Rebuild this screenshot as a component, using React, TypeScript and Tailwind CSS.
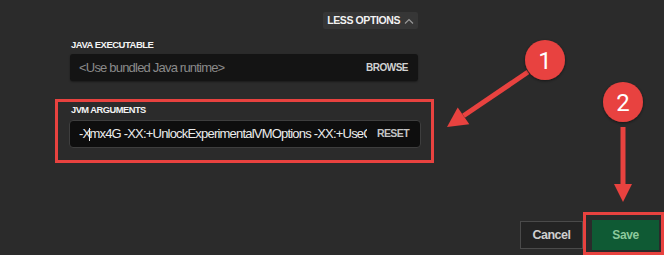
import type { JSX } from "react";

function ChevronUp(): JSX.Element {
  return (
    <svg width="10" height="6" viewBox="0 0 10 6" className="ml-[4px]">
      <path d="M1 5.5 L5 1.5 L9 5.5" fill="none" stroke="#9a9a9a" strokeWidth="1.1" />
    </svg>
  );
}

function Annotations(): JSX.Element {
  return (
    <svg
      width="664"
      height="255"
      viewBox="0 0 664 255"
      className="absolute inset-0 pointer-events-none"
    >
      <defs>
        <filter id="shadow" x="-30%" y="-30%" width="160%" height="160%">
          <feDropShadow dx="0" dy="1" stdDeviation="1.5" floodColor="#000" floodOpacity="0.5" />
        </filter>
      </defs>
      {/* arrow 1 */}
      <line x1="528" y1="72" x2="463.5" y2="115.8" stroke="#e8423f" strokeWidth="5" />
      <polygon points="447,127 469.3,124.2 457.7,107.4" fill="#e8423f" />
      <circle cx="545" cy="60" r="20" fill="#e8423f" filter="url(#shadow)" />
      <text
        x="545"
        y="69"
        textAnchor="middle"
        fontSize="24"
        fill="#fff"
        fontFamily="Roboto, 'Liberation Sans', sans-serif"
      >
        1
      </text>
      {/* arrow 2 */}
      <line x1="623" y1="127" x2="623" y2="186" stroke="#e8423f" strokeWidth="5" />
      <polygon points="614,184 632,184 623,202" fill="#e8423f" />
      <circle cx="623" cy="102" r="20" fill="#e8423f" filter="url(#shadow)" />
      <text
        x="623"
        y="111"
        textAnchor="middle"
        fontSize="24"
        fill="#fff"
        fontFamily="Roboto, 'Liberation Sans', sans-serif"
      >
        2
      </text>
    </svg>
  );
}

export default function App(): JSX.Element {
  return (
    <div className="relative w-[664px] h-[255px] bg-[#2b2b2b] overflow-hidden flex flex-col font-['Liberation_Sans',Arial,sans-serif]">
      <div className="ml-[70px] w-[348px] pt-[12px] flex flex-col">
        <div className="flex justify-end">
          <button className="h-[17px] flex items-center px-[4px] bg-[#363636] rounded-[2px] text-[10.5px] font-bold text-[#f2f2f2] tracking-[-0.4px]">
            LESS OPTIONS
            <ChevronUp />
          </button>
        </div>

        <div className="mt-[10px] ml-[1px] leading-[11px] text-[9.5px] font-bold text-[#f4f4f4] tracking-[-0.5px]">
          JAVA EXECUTABLE
        </div>
        <div className="mt-[4px] h-[27px] bg-[#141414] rounded-[3px] flex items-center justify-between pl-[9px] pr-[10px] shadow-[0_1px_2px_rgba(0,0,0,0.4)]">
          <span className="text-[13px] tracking-[-0.8px] text-[#8a8a8a]">&lt;Use bundled Java runtime&gt;</span>
          <span className="text-[10px] tracking-[-0.5px] font-bold text-[#d2d2d2]">BROWSE</span>
        </div>

        <div className="mt-[18px] -ml-[15px] w-[379px] border-[3px] border-[#e8423f] pt-[3px] pl-[11px] pr-[10px] pb-[12px]">
          <div className="ml-[2px] leading-[11px] text-[9.3px] font-bold text-[#f4f4f4] tracking-[-0.5px]">
            JVM ARGUMENTS
          </div>
          <div className="mt-[4px] h-[28px] bg-[#0e0e0e] border border-[#3e3e3e] rounded-[4px] flex items-center pl-[9px] pr-[11px]">
            <div className="flex-1 overflow-hidden whitespace-nowrap text-[13px] tracking-[-0.8px] text-[#ececec]">
              -X<span className="inline-block w-[1px] h-[13px] bg-[#ececec] align-middle -mx-[1px]" />mx4G -XX:+UnlockExperimentalVMOptions -XX:+UseG1GC
            </div>
            <span className="ml-[10px] text-[10.5px] tracking-[-0.6px] font-bold text-[#c4c4c4]">RESET</span>
          </div>
        </div>
      </div>

      <div className="mt-auto flex justify-end items-end">
        <button className="mb-[6px] w-[63px] h-[28px] border border-[#4a4a4a] bg-[#232323] text-[12.5px] tracking-[-0.5px] font-bold text-[#cfcfcf]">
          Cancel
        </button>
        <div className="w-[81px] h-[43px] border-[3px] border-[#e8423f] pt-[5px] pl-[6px] pr-[2px] pb-[2px]">
          <button className="w-full h-[30px] bg-[#0f5a34] text-[12px] tracking-[-0.4px] font-bold text-[#8cc99c]">
            Save
          </button>
        </div>
      </div>

      <Annotations />
    </div>
  );
}
